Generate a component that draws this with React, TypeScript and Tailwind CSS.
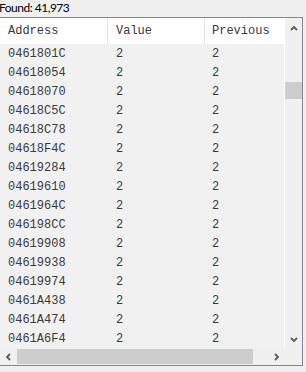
import React from "react";

const rows = [
  "0461801C","04618054","04618070","04618C5C","04618C78","04618F4C","04619284","04619610",
  "0461964C","046198CC","04619908","04619938","04619974","0461A438","0461A474","0461A6F4",
];

function Chevron({ dir }: { dir: "up" | "down" | "left" | "right" }) {
  const pts: Record<string, string> = {
    up: "1,5 4,2 7,5",
    down: "1,2 4,5 7,2",
    left: "5,1 2,4 5,7",
    right: "2,1 5,4 2,7",
  };
  const w = dir === "up" || dir === "down" ? 8 : 7;
  const h = dir === "up" || dir === "down" ? 7 : 8;
  return (
    <svg width={w} height={h} viewBox={`0 0 ${w} ${h}`}>
      <polyline points={pts[dir]} fill="none" stroke="#5a5a5a" strokeWidth="1.8" />
    </svg>
  );
}

export default function App() {
  return (
    <div className="w-[306px] h-[372px] bg-[#f0f0f0] overflow-hidden">
      <div
        className="h-[17px] -ml-[1px] text-[12px] leading-[15px] tracking-[-0.5px] text-black"
        style={{ fontFamily: 'Lato, sans-serif' }}
      >
        Found: 41,973
      </div>
      <div className="-ml-[1px] w-[304px] h-[349px] border border-[#828790] bg-white flex flex-col">
        <div className="flex h-[330px]">
          <div
            className="w-[285px] flex flex-col text-[12px] text-[#3a3a3a]"
            style={{ fontFamily: '"Liberation Mono", monospace' }}
          >
            <div className="flex h-[26px] bg-white items-center">
              <div className="w-[108px] h-full pl-[8px] flex items-center border-r border-[#e5e5e5]">Address</div>
              <div className="w-[97px] h-full pl-[8px] flex items-center border-r border-[#e5e5e5]">Value</div>
              <div className="flex-1 h-full pl-[7px] flex items-center">Previous</div>
            </div>
            <div className="flex flex-col bg-[#f1f1f1] border-r border-white">
              {rows.map((r) => (
                <div key={r} className="flex h-[19px] items-center">
                  <div className="w-[108px] pl-[8px]">{r}</div>
                  <div className="w-[97px] pl-[8px]">2</div>
                  <div className="flex-1 pl-[7px]">2</div>
                </div>
              ))}
            </div>
          </div>
          <div className="w-[17px] bg-[#f0f0f0] flex flex-col">
            <div className="h-[17px] flex items-center justify-center pt-[3px]">
              <Chevron dir="up" />
            </div>
            <div className="flex-1 relative">
              <div className="absolute left-0 right-0 top-[47px] h-[17px] bg-[#cdcdcd]" />
            </div>
            <div className="h-[17px] flex items-center justify-center">
              <Chevron dir="down" />
            </div>
          </div>
        </div>
        <div className="flex h-[17px]">
          <div className="w-[285px] bg-[#f0f0f0] flex items-stretch">
            <div className="w-[17px] flex items-center justify-center">
              <Chevron dir="left" />
            </div>
            <div className="flex-1 flex items-stretch py-[1px]">
              <div className="w-[236px] bg-[#cdcdcd]" />
            </div>
            <div className="w-[17px] flex items-center justify-center">
              <Chevron dir="right" />
            </div>
          </div>
          <div className="w-[17px] bg-[#f0f0f0]" />
        </div>
      </div>
    </div>
  );
}
